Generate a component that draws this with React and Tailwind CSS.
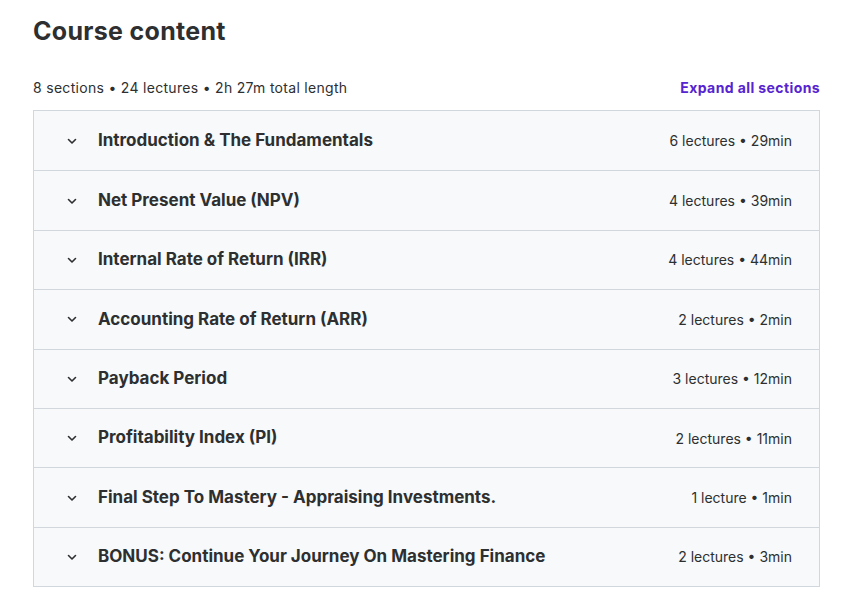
const sections = [
  { title: 'Introduction & The Fundamentals', meta: '6 lectures • 29min' },
  { title: 'Net Present Value (NPV)', meta: '4 lectures • 39min' },
  { title: 'Internal Rate of Return (IRR)', meta: '4 lectures • 44min' },
  { title: 'Accounting Rate of Return (ARR)', meta: '2 lectures • 2min' },
  { title: 'Payback Period', meta: '3 lectures • 12min' },
  { title: 'Profitability Index (PI)', meta: '2 lectures • 11min' },
  { title: 'Final Step To Mastery - Appraising Investments.', meta: '1 lecture • 1min' },
  { title: 'BONUS: Continue Your Journey On Mastering Finance', meta: '2 lectures • 3min' },
];

function Chevron() {
  return (
    <svg width="12" height="12" viewBox="0 0 12 12" fill="none" className="text-[#2d2f31]">
      <path d="M2.5 4.5 6 8l3.5-3.5" stroke="currentColor" strokeWidth="1.6" strokeLinecap="round" strokeLinejoin="round" />
    </svg>
  );
}

export default function App() {
  return (
    <div className="min-h-screen bg-white font-['Inter',sans-serif] text-[#2d2f31] px-[33px] pt-[14px]">
      <h2 className="text-[25px] font-bold leading-[34px] tracking-[0.3px]">Course content</h2>

      <div className="mt-[30px] flex items-center justify-between text-[14px] leading-[20px]">
        <span className="tracking-[0.3px]">8 sections • 24 lectures • 2h 27m total length</span>
        <button className="font-bold text-[#5624d0] tracking-[0.4px] mr-[-7px]">Expand all sections</button>
      </div>

      <div className="mt-[12px] w-[787px] border border-[#d1d7dc]">
        {sections.map((s, i) => (
          <div
            key={i}
            className={`flex h-[59.4px] items-center bg-[#f7f9fa] pl-[32px] pr-[27px] ${i > 0 ? 'border-t border-[#d1d7dc]' : ''}`}
          >
            <Chevron />
            <span className="ml-[20px] flex-1 text-[17px] font-bold">{s.title}</span>
            <span className="text-[14px]">{s.meta}</span>
          </div>
        ))}
      </div>
    </div>
  );
}
